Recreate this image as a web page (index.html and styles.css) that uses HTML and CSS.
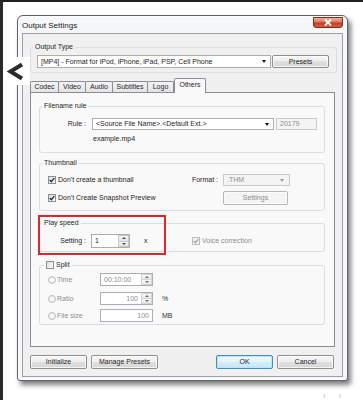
FILE: index.html
```html
<!DOCTYPE html>
<html>
<head>
<meta charset="utf-8">
<title>Output Settings</title>
<link rel="stylesheet" href="styles.css">
</head>
<body>
<div class="screen">
  <div class="back"><svg width="27" height="28" viewBox="0 0 27 28"><polyline points="19,7.5 7.5,14.5 19,21.5" fill="none" stroke="#2b2b2b" stroke-width="4"/></svg></div>
  <div class="window">
    <div class="titlebar">
      <span class="title">Output Settings</span>
      <span class="close"><svg width="8" height="7" viewBox="0 0 8 7"><path d="M1 0.5 L7 6.5 M7 0.5 L1 6.5" stroke="#fff" stroke-width="1.8"/></svg></span>
    </div>
    <div class="client">
      <fieldset class="group g-out">
        <legend>Output Type</legend>
        <div class="g-out-body">
          <div class="combo combo-out"><span>[MP4] - Format for iPod, iPhone, iPad, PSP, Cell Phone</span><i class="arrow"></i></div>
          <button class="btn btn-presets">Presets</button>
        </div>
      </fieldset>
      <div class="tabs">
        <span class="tab t-codec">Codec</span>
        <span class="tab t-video">Video</span>
        <span class="tab t-audio">Audio</span>
        <span class="tab t-subs">Subtitles</span>
        <span class="tab t-logo">Logo</span>
        <span class="tab active">Others</span>
      </div>
      <div class="panel">
        <fieldset class="group g-file">
          <legend>Filename rule</legend>
          <div class="row rule-row">
            <span class="lbl-rule">Rule :</span>
            <div class="combo combo-rule"><span>&lt;Source File Name&gt;.&lt;Default Ext.&gt;</span><i class="arrow"></i></div>
            <div class="field field-num disabled">20179</div>
          </div>
          <div class="example">example.mp4</div>
        </fieldset>

        <fieldset class="group g-thumb">
          <legend>Thumbnail</legend>
          <div class="thumb-row r1">
            <span class="chk"><span class="cb"><svg width="6" height="6" viewBox="0 0 6 6"><path d="M0.7 3 L2.4 4.7 L5.3 1.1" fill="none" stroke="#1d2a4a" stroke-width="1.3"/></svg></span>Don't create a thumbnail</span>
            <span class="lbl-format">Format :</span>
            <div class="combo combo-format disabled"><span>.THM</span><i class="arrow"></i></div>
          </div>
          <div class="thumb-row r2">
            <span class="chk"><span class="cb"><svg width="6" height="6" viewBox="0 0 6 6"><path d="M0.7 3 L2.4 4.7 L5.3 1.1" fill="none" stroke="#1d2a4a" stroke-width="1.3"/></svg></span>Don't Create Snapshot Preview</span>
            <button class="btn btn-settings">Settings</button>
          </div>
        </fieldset>

        <div class="play-wrap">
          <fieldset class="group g-play">
            <legend>Play speed</legend>
            <div class="play-row">
              <span class="lbl-setting">Setting :</span>
              <div class="spinbox sb-setting"><span class="val">1</span><span class="spin"><i class="up"></i><i class="down"></i></span></div>
              <span class="unit-x">x</span>
              <span class="voice"><span class="cb cb-dis"><svg width="6" height="6" viewBox="0 0 6 6"><path d="M0.7 3 L2.4 4.7 L5.3 1.1" fill="none" stroke="#a3a3a3" stroke-width="1.3"/></svg></span>Voice correction</span>
            </div>
          </fieldset>
          <div class="redbox"></div>
        </div>

        <fieldset class="group g-split">
          <legend class="split-legend"><span class="cb"></span>Split</legend>
          <div class="split-row">
            <span class="radio"></span><span class="rlabel">Time</span>
            <div class="spinbox sb-split disabled"><span class="val val-left">00:10:00</span><span class="spin"><i class="up"></i><i class="down"></i></span></div>
          </div>
          <div class="split-row r-ratio">
            <span class="radio"></span><span class="rlabel">Ratio</span>
            <div class="spinbox sb-split disabled"><span class="val val-right">100</span><span class="spin"><i class="up"></i><i class="down"></i></span></div>
            <span class="unit">%</span>
          </div>
          <div class="split-row r-size">
            <span class="radio"></span><span class="rlabel">File size</span>
            <div class="spinbox sb-split disabled"><span class="val val-right">100</span></div>
            <span class="unit">MB</span>
          </div>
        </fieldset>
      </div>
      <div class="buttons">
        <button class="btn btn-b">Initialize</button>
        <button class="btn btn-manage">Manage Presets</button>
        <span class="spacer"></span>
        <button class="btn btn-b btn-ok">OK</button>
        <button class="btn btn-b">Cancel</button>
      </div>
    </div>
  </div>
  <div class="foot">ı ı</div>
</div>
</body>
</html>
```

FILE: styles.css
```css
* { box-sizing: border-box; }
html, body { margin: 0; padding: 0; background: #fff; }
body {
  font-family: "Liberation Sans", Arial, sans-serif;
  font-size: 7px;
  line-height: 10px;
  color: #262626;
}
.screen {
  position: relative;
  width: 363px;
  height: 400px;
  overflow: hidden;
  background: #fff;
  border-top: 2px solid #1f1f1f;
  border-left: 3px solid #2a2a2a;
}
.back {
  position: absolute;
  left: 0;
  top: 55px;
  width: 27px;
  height: 28px;
  background: #fff;
  z-index: 5;
}
.back svg { display: block; }

.window {
  margin: 13px 0 0 14px;
  width: 331px;
  height: 366px;
  border: 1px solid #5d6166;
  border-radius: 6px 6px 3px 3px;
  background: #f5f7f9;
  box-shadow: inset 0 0 0 1px #fdfdfd, 3px 4px 5px rgba(0,0,0,.5);
  display: flex;
  flex-direction: column;
}
.titlebar {
  flex: none;
  height: 17px;
  display: flex;
  justify-content: space-between;
  align-items: flex-start;
  padding: 0 4px;
}
.title { margin-top: 5px; font-size: 8px; line-height: 10px; color: #1a1a1a; }
.close {
  margin-top: 1px;
  width: 30px;
  height: 11px;
  border: 1px solid #7b2d1e;
  border-radius: 0 0 3px 3px;
  background: linear-gradient(#ebb4a6, #d9765f 45%, #c43c20 55%, #d9603f);
  display: flex;
  align-items: center;
  justify-content: center;
}
.close svg { display: block; }

.client {
  flex: none;
  margin: 0 4px;
  height: 344px;
  border: 1px solid #9aa0a6;
  background: #f0f0f0;
}

.group {
  margin: 0;
  padding: 0;
  min-width: 0;
  border: 1px solid #d5dfe5;
  border-radius: 3px;
}
.group legend {
  padding: 0 2px;
  margin-left: 2px;
  font-size: 7px;
  line-height: 10px;
}
.g-out { margin: 8px 5px 0 7px; }
.g-out-body { display: flex; gap: 1px; padding: 3px 7px 4px 6px; }

.combo {
  height: 13px;
  background: #fff;
  border: 1px solid #abadb3;
  display: flex;
  align-items: center;
  padding-left: 3px;
}
.combo span { flex: 1; white-space: nowrap; overflow: hidden; line-height: 10px; }
.arrow {
  width: 0; height: 0;
  border-left: 2.5px solid transparent;
  border-right: 2.5px solid transparent;
  border-top: 3px solid #111;
  margin-right: 4px;
}
.combo-out { width: 234px; }

.btn {
  font: inherit;
  font-size: 7px;
  line-height: 10px;
  color: #262626;
  height: 13px;
  padding: 0;
  border: 1px solid #8e8f8f;
  border-radius: 2px;
  background: linear-gradient(#f6f6f6, #ededed 50%, #e0e0e0 50%, #d6d6d6);
  box-shadow: inset 0 0 0 1px rgba(255,255,255,.75);
}
.btn-presets { width: 57px; }

.tabs {
  display: flex;
  align-items: flex-end;
  height: 14px;
  margin: 5px 0 0 7px;
  position: relative;
  z-index: 1;
}
.tab {
  height: 11px;
  border: 1px solid #898c95;
  border-bottom: none;
  margin-left: -1px;
  background: linear-gradient(#f4f4f4, #e4e4e4);
  text-align: center;
  line-height: 10px;
  border-radius: 2px 2px 0 0;
}
.t-codec { width: 29px; margin-left: 0; }
.t-video { width: 28px; }
.t-audio { width: 28px; }
.t-subs { width: 36px; }
.t-logo { width: 27px; }
.tab.active {
  width: 32px;
  height: 15px;
  margin-left: 0;
  margin-bottom: -1px;
  padding-top: 1px;
  background: #f9f9f9;
}

.panel {
  margin-left: 7px;
  width: 305px;
  height: 255px;
  border: 1px solid #898c95;
  background: #f9f9f9;
  display: flex;
  flex-direction: column;
}

.row { display: flex; align-items: center; }
.g-file { margin: 8px 9px 0 8px; padding: 7px 0 8px; }
.rule-row { height: 12px; }
.lbl-rule { width: 49px; text-align: right; padding-right: 3px; }
.combo-rule { width: 182px; height: 12px; margin-left: 3px; }
.field {
  height: 12px;
  border: 1px solid #abadb3;
  background: #fff;
  line-height: 10px;
  padding: 0 3px;
}
.disabled { background: #f4f4f4; border-color: #c9cbce; color: #8d8d8d; }
.field-num { width: 41px; margin-left: 2px; }
.example { margin-top: 4px; padding-left: 53px; }

.g-thumb { margin: 5px 9px 0 8px; padding: 6px 0 5px; }
.thumb-row { display: flex; align-items: center; padding: 0 34px 0 8px; }
.thumb-row.r1 { height: 12px; }
.thumb-row.r2 { height: 14px; margin-top: 5px; }
.chk { flex: 1; display: flex; align-items: center; gap: 2px; }
.lbl-format { margin-right: 5px; }
.combo-format { width: 67px; height: 12px; }
.combo-format .arrow { border-top-color: #9a9a9a; margin-right: 5px; }
.btn-settings {
  width: 65px;
  height: 14px;
  margin-right: 2px;
  color: #8d8d8d;
  border-color: #b5b9bc;
  background: #f4f4f4;
}

.cb {
  flex: none;
  width: 8px;
  height: 8px;
  border: 1px solid #8e8f8f;
  background: linear-gradient(135deg, #dedede, #fbfbfb);
  display: inline-flex;
  align-items: center;
  justify-content: center;
}
.cb svg { display: block; }
.cb-dis { border-color: #bcbcbc; background: #f4f4f4; }

.play-wrap { position: relative; margin: 7px 9px 0 8px; }
.g-play { padding: 6px 0 3px; }
.play-row { height: 14px; display: flex; align-items: center; }
.lbl-setting { width: 46px; text-align: right; }
.spinbox {
  display: flex;
  height: 14px;
  border: 1px solid #abadb3;
  background: #fff;
}
.sb-setting { width: 39px; margin-left: 5px; }
.spinbox .val { flex: 1; padding-left: 3px; line-height: 12px; white-space: nowrap; }
.spin { width: 11px; display: flex; flex-direction: column; }
.spin i {
  flex: 1;
  display: flex;
  align-items: center;
  justify-content: center;
  background: linear-gradient(#f6f6f6, #e3e3e3);
  border: 1px solid #c9c9c9;
}
.spin i + i { border-top: none; }
.spin .up::after {
  content: "";
  border-left: 2px solid transparent;
  border-right: 2px solid transparent;
  border-bottom: 2px solid #4a4a4a;
}
.spin .down::after {
  content: "";
  border-left: 2px solid transparent;
  border-right: 2px solid transparent;
  border-top: 2px solid #4a4a4a;
}
.unit-x { margin-left: 14px; width: 48px; }
.voice { display: flex; align-items: center; gap: 2px; color: #8d8d8d; }
.redbox {
  position: absolute;
  left: -1px;
  top: -3px;
  width: 128px;
  height: 40px;
  border: 2px solid #e4252b;
}

.g-split { margin: 8px 9px 0 8px; padding: 3px 0 2px; }
.group .split-legend {
  display: flex;
  align-items: center;
  gap: 2px;
  margin-left: 4px;
}
.split-row {
  display: flex;
  align-items: center;
  height: 13px;
  padding-left: 8px;
  color: #8d8d8d;
}
.split-row.r-ratio { margin-top: 6px; }
.split-row.r-size { margin-top: 4px; }
.radio {
  flex: none;
  width: 8px;
  height: 8px;
  border-radius: 50%;
  border: 1px solid #bdbdbd;
  background: radial-gradient(#fdfdfd, #e4e4e4);
}
.rlabel { width: 43px; margin-left: 1px; }
.sb-split { width: 53px; height: 13px; }
.sb-split .val { line-height: 11px; }
.sb-split .spin i { opacity: .8; }
.val-left { padding-left: 2px; }
.spinbox .val-right { text-align: right; padding-right: 3px; }
.unit { margin-left: 9px; color: #333; }

.buttons {
  display: flex;
  gap: 4px;
  margin-top: 8px;
  padding: 0 8px 0 7px;
}
.buttons .btn { height: 14px; }
.btn-b { width: 57px; }
.btn-manage { width: 67px; }
.spacer { flex: 1; }
.btn-ok {
  border-color: #3c8fc8;
  box-shadow: inset 0 0 0 1px #b9e6fb;
  background: linear-gradient(#f2f9fd, #e4f3fc 50%, #d4edfb 50%, #c6e6f8);
}

.foot {
  margin-top: 10px;
  text-align: right;
  padding-right: 16px;
  color: #b0b0b0;
  letter-spacing: 6px;
}
```
